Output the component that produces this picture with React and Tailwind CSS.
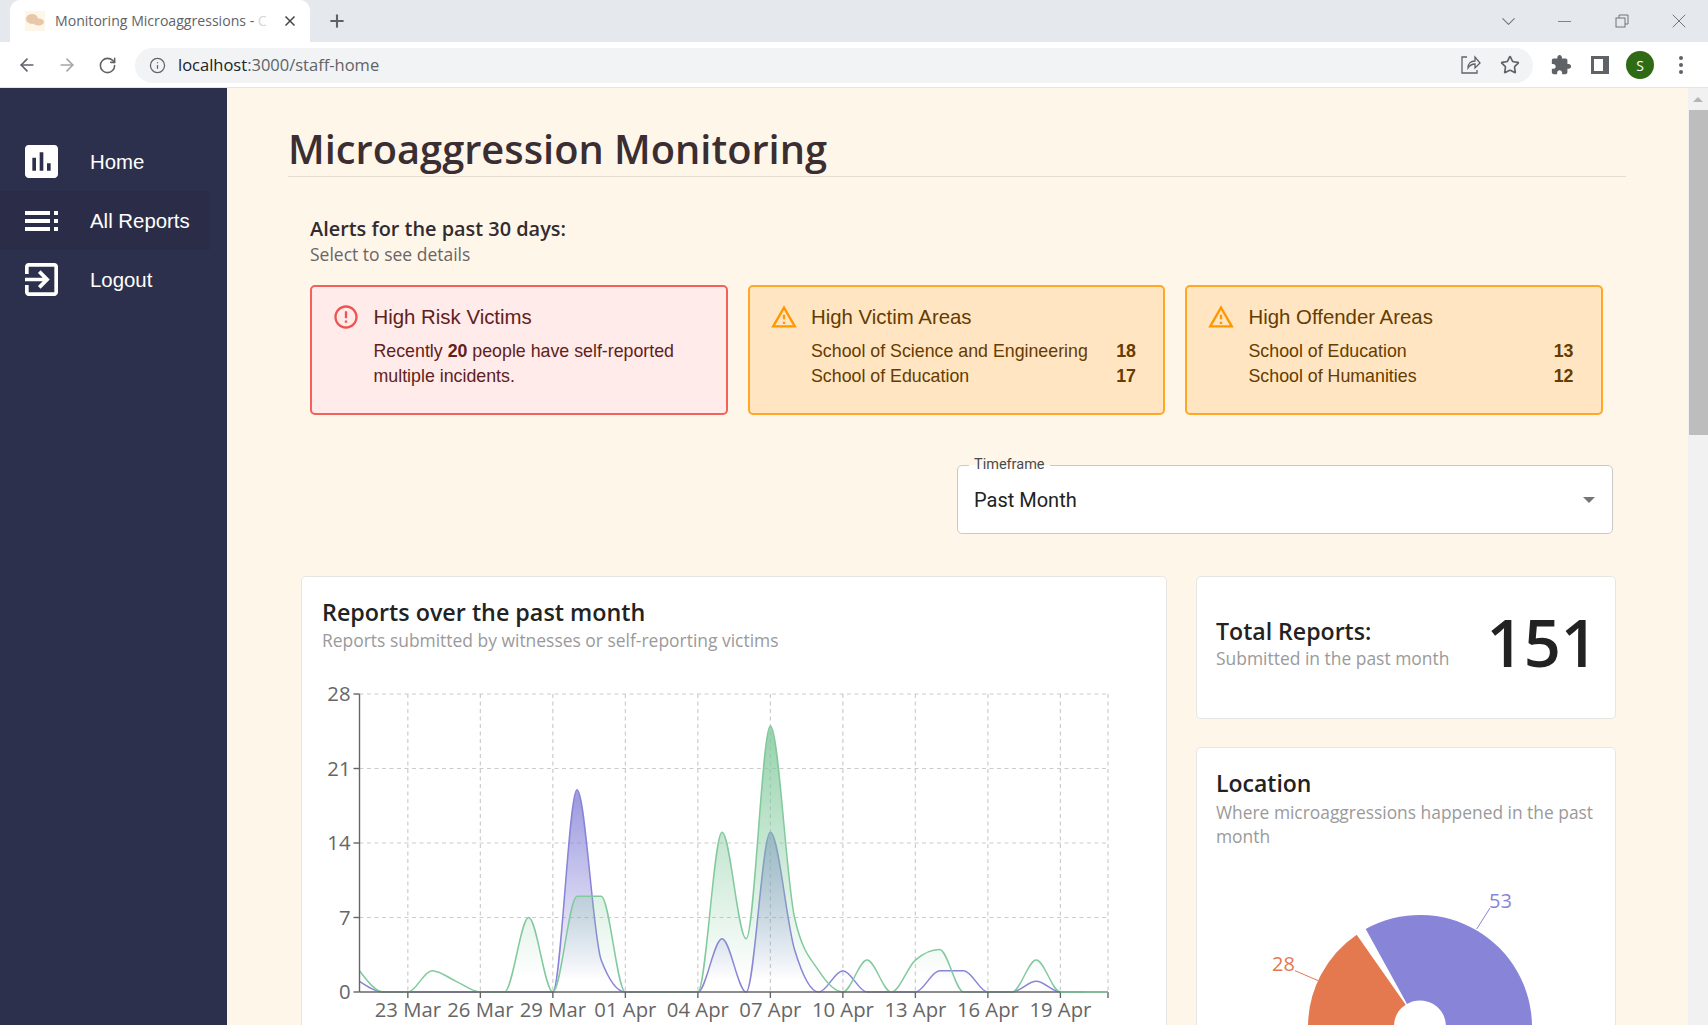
import React from "react";
import { ArrowLeft, ArrowRight, RotateCw, Info, Star, ChevronDown, Minus, X, Plus } from "lucide-react";

const green = [2, 0, 0, 2, 1, 0, 0, 7, 0, 9, 9, 0, 0, 0, 0, 15, 5, 25, 7, 2, 0, 3, 0, 3, 4, 0, 0, 0, 3, 0, 0];
const purple = [1, 0, 0, 0, 0, 0, 0, 0, 0, 19, 3, 0, 0, 0, 0, 5, 0, 15, 4, 0, 2, 0, 0, 0, 2, 2, 0, 0, 1, 0, 0];
const xTicks = ["23 Mar", "26 Mar", "29 Mar", "01 Apr", "04 Apr", "07 Apr", "10 Apr", "13 Apr", "16 Apr", "19 Apr"];

const left = 359.5;
const right = 1108;
const top = 694;
const base = 992;
const px = (i) => left + i * ((right - left) / 30.97);
const py = (v) => base - (v / 28) * (base - top);

// same maths as d3 curveMonotoneX
function monotone(values) {
  const pts = values.map((v, i) => [px(i), py(v)]);
  const n = pts.length;
  const slope = [];
  for (let i = 0; i < n - 1; i++) slope.push((pts[i + 1][1] - pts[i][1]) / (pts[i + 1][0] - pts[i][0]));
  const t = [slope[0]];
  for (let i = 1; i < n - 1; i++) {
    const a = slope[i - 1];
    const b = slope[i];
    t.push(a * b <= 0 ? 0 : (Math.sign(a) + Math.sign(b)) * Math.min(Math.abs(a), Math.abs(b), 0.25 * Math.abs(a + b)));
  }
  t.push(slope[n - 2]);
  t[0] = (3 * slope[0] - t[1]) / 2;
  let d = `M${pts[0][0]} ${pts[0][1]}`;
  for (let i = 0; i < n - 1; i++) {
    const h = (pts[i + 1][0] - pts[i][0]) / 3;
    d += `C${pts[i][0] + h} ${pts[i][1] + h * t[i]} ${pts[i + 1][0] - h} ${pts[i + 1][1] - h * t[i + 1]} ${pts[i + 1][0]} ${pts[i + 1][1]}`;
  }
  return d;
}

function closeArea(line, n) {
  return `${line}L${px(n - 1)} ${base}L${px(0)} ${base}Z`;
}

function Series({ values, color, id }) {
  const line = monotone(values);
  return (
    <g>
      <path d={closeArea(line, values.length)} fill={`url(#${id})`} />
      <path d={line} fill="none" stroke={color} strokeWidth="1.5" />
    </g>
  );
}

function ReportsChart() {
  const xs = [0, 1, 2, 3, 4, 5, 6, 7, 8, 9].map((i) => px(2 + i * 3));
  return (
    <svg className="block mt-[28px]" width="830" height="400" viewBox="322 680 830 400">
      <defs>
        <linearGradient id="fillPurple" x1="0" y1="0" x2="0" y2="1">
          <stop offset="5%" stopColor="#8884d8" stopOpacity="0.8" />
          <stop offset="95%" stopColor="#8884d8" stopOpacity="0" />
        </linearGradient>
        <linearGradient id="fillGreen" x1="0" y1="0" x2="0" y2="1">
          <stop offset="5%" stopColor="#82ca9d" stopOpacity="0.8" />
          <stop offset="95%" stopColor="#82ca9d" stopOpacity="0" />
        </linearGradient>
      </defs>
      <g stroke="#ccc" strokeWidth="1.2" strokeDasharray="4 3.5">
        {[28, 21, 14, 7].map((v) => (
          <line key={v} x1={left} x2={right} y1={py(v)} y2={py(v)} />
        ))}
        {[...xs, right].map((x) => (
          <line key={x} x1={x} x2={x} y1={top} y2={base} />
        ))}
      </g>
      <Series values={purple} color="#8884d8" id="fillPurple" />
      <Series values={green} color="#82ca9d" id="fillGreen" />
      <g stroke="#666" strokeWidth="1.4">
        <line x1={left} x2={left} y1={top} y2={base} />
        <line x1={left} x2={right} y1={base} y2={base} />
        {[28, 21, 14, 7, 0].map((v) => (
          <line key={v} x1={left - 6} x2={left} y1={py(v)} y2={py(v)} />
        ))}
        {[...xs, right].map((x) => (
          <line key={x} x1={x} x2={x} y1={base} y2={base + 6} />
        ))}
      </g>
      <line x1={px(29)} x2={right} y1={base} y2={base} stroke="#82ca9d" strokeWidth="1.5" />
      <g fill="#666" fontSize="20.3" fontFamily="'Open Sans', sans-serif">
        {[28, 21, 14, 7, 0].map((v) => (
          <text key={v} x={left - 9} y={py(v) + 7} textAnchor="end">
            {v}
          </text>
        ))}
        {xTicks.map((t, i) => (
          <text key={t} x={xs[i]} y={1017} textAnchor="middle">
            {t}
          </text>
        ))}
      </g>
    </svg>
  );
}

function LocationPie() {
  return (
    <svg className="block mt-[31px]" width="418" height="200" viewBox="1197 880 418 200">
      <path d="M1365.7 930A112 112 0 0 1 1532 1028L1446 1028A26 26 0 0 0 1407 1005Z" fill="#8884d8" />
      <path d="M1356.7 935.7A112 112 0 0 0 1308 1028L1394 1028A26 26 0 0 1 1405.7 1005.7Z" fill="#e4784f" />
      <line x1="1476.7" y1="930" x2="1490" y2="909" stroke="#8884d8" />
      <line x1="1318.3" y1="981.7" x2="1295" y2="971.7" stroke="#e4784f" />
      <g fontSize="20" fontFamily="'Open Sans', sans-serif">
        <text x="1489" y="909" fill="#8884d8">53</text>
        <text x="1272" y="972" fill="#e4784f">28</text>
      </g>
    </svg>
  );
}

function NavItem({ label, active, children }) {
  return (
    <div className={`flex items-center h-[59px] w-[210px] pl-[25px] ${active ? "bg-[#2b2d48]" : ""}`}>
      <div className="w-[33px] h-[33px] flex items-center justify-center">{children}</div>
      <span className="ml-[32px] pt-[1px] text-[20.4px] text-white font-['Liberation_Sans',sans-serif]">{label}</span>
    </div>
  );
}

function Sidebar() {
  return (
    <aside className="w-[227px] shrink-0 bg-[#2d304c] pt-[44px]">
      <NavItem label="Home">
        <svg width="33" height="33" viewBox="3 3 18 18" fill="#fff">
          <path d="M19 3H5c-1.1 0-2 .9-2 2v14c0 1.1.9 2 2 2h14c1.1 0 2-.9 2-2V5c0-1.1-.9-2-2-2zM9 17H7v-7h2v7zm4 0h-2V7h2v10zm4 0h-2v-4h2v4z" />
        </svg>
      </NavItem>
      <NavItem label="All Reports" active>
        <svg width="33" height="20" viewBox="0 0 33 20" fill="#fff">
          <rect x="0" y="0" width="25" height="4" />
          <rect x="0" y="8" width="25" height="4" />
          <rect x="0" y="16" width="25" height="4" />
          <rect x="29" y="0" width="4" height="4" />
          <rect x="29" y="8" width="4" height="4" />
          <rect x="29" y="16" width="4" height="4" />
        </svg>
      </NavItem>
      <NavItem label="Logout">
        <svg width="33" height="33" viewBox="3 3 18 18" fill="#fff">
          <path d="M10.09 15.59L11.5 17l5-5-5-5-1.41 1.41L12.67 11H3v2h9.67l-2.58 2.59zM19 3H5c-1.11 0-2 .9-2 2v4h2V5h14v14H5v-4H3v4c0 1.1.89 2 2 2h14c1.1 0 2-.9 2-2V5c0-1.1-.9-2-2-2z" />
        </svg>
      </NavItem>
    </aside>
  );
}

function ChromeBar() {
  return (
    <div className="shrink-0">
      <div className="h-[42px] bg-[#e5e8ec] flex items-end pl-[10px] pr-[17px]">
        <div className="w-[300px] h-[42px] bg-white rounded-t-[10px] flex items-center pl-[15px] pr-[12px]">
          <div className="w-[20px] h-[20px] bg-[#fff6ea] flex items-center justify-center">
            <svg width="20" height="20" viewBox="0 0 20 20" fill="#e8c8a8">
              <ellipse cx="7" cy="8" rx="6" ry="5" />
              <ellipse cx="13.5" cy="11" rx="5.5" ry="3.5" />
            </svg>
          </div>
          <span className="ml-[10px] whitespace-nowrap text-[14.1px] text-[#5f6368] font-['Open_Sans',sans-serif]">
            Monitoring Microaggressions - <span className="text-[#d5d7d9]">C</span>
          </span>
          <X size={16} strokeWidth={2.5} className="ml-auto text-[#45484d]" />
        </div>
        <Plus size={20} strokeWidth={2.5} className="ml-[17px] mb-[11px] text-[#5f6368]" />
        <div className="ml-auto flex items-center h-[36px] self-center text-[#70757a]">
          <ChevronDown size={23} strokeWidth={1.1} />
          <Minus size={21} strokeWidth={1} className="ml-[34px]" />
          <svg className="ml-[40px]" width="14" height="14" viewBox="0 0 14 14" fill="none" stroke="currentColor">
            <rect x="1" y="4" width="9" height="9" />
            <path d="M4 4V1h9v9h-3" />
          </svg>
          <X size={24} strokeWidth={1} className="ml-[38px]" />
        </div>
      </div>
      <div className="h-[46px] pt-[1px] bg-white border-b-[1.5px] border-[#e4e6e9] flex items-center text-[#5f6368]">
        <ArrowLeft size={20} strokeWidth={2} className="ml-[17px]" />
        <ArrowRight size={20} strokeWidth={2} className="ml-[20px] text-[#a3a6aa]" />
        <RotateCw size={19} strokeWidth={2} className="ml-[21px]" />
        <div className="ml-[18px] w-[1398px] h-[35px] bg-[#f1f3f4] rounded-full flex items-center pl-[14px] pr-[13px]">
          <Info size={17} strokeWidth={1.75} />
          <span className="ml-[12px] text-[16.5px] text-[#5f6368] font-['Open_Sans',sans-serif]">
            <span className="text-[#202124]">localhost</span>:3000/staff-home
          </span>
          <svg className="ml-auto mr-[-1px]" width="20" height="20" viewBox="0 0 20 20" fill="none" stroke="currentColor" strokeWidth="1.3">
            <path d="M6 2H1v16h15v-3M7 13c0-5 3-7 7-7V2l5 6-5 5V9c-3 0-5 1-7 4z" />
          </svg>
          <Star size={20} strokeWidth={2} className="ml-[20px]" />
        </div>
        <svg className="ml-[17px]" width="22" height="22" viewBox="0 0 24 24" fill="currentColor">
          <path d="M20.5 11H19V7c0-1.1-.9-2-2-2h-4V3.5C13 2.12 11.88 1 10.5 1S8 2.12 8 3.5V5H4c-1.1 0-1.99.9-1.99 2v3.8H3.5c1.49 0 2.7 1.21 2.7 2.7s-1.21 2.7-2.7 2.7H2V20c0 1.1.9 2 2 2h3.8v-1.5c0-1.49 1.21-2.7 2.7-2.7 1.49 0 2.7 1.21 2.7 2.7V22H17c1.1 0 2-.9 2-2v-4h1.5c1.38 0 2.5-1.12 2.5-2.5S21.88 11 20.5 11z" />
        </svg>
        <div className="ml-[19px] w-[18px] h-[18px] border-[3px] border-r-[6px] border-[#5f6368]" />
        <div className="ml-[17px] w-[28px] h-[28px] rounded-full bg-[#2e6b14] text-white text-[14px] flex items-center justify-center font-['Open_Sans',sans-serif]">
          S
        </div>
        <div className="ml-[25px] flex flex-col gap-[3px]">
          <span className="w-[4px] h-[4px] rounded-full bg-[#5f6368]" />
          <span className="w-[4px] h-[4px] rounded-full bg-[#5f6368]" />
          <span className="w-[4px] h-[4px] rounded-full bg-[#5f6368]" />
        </div>
      </div>
    </div>
  );
}

function WarnIcon() {
  return (
    <svg width="28" height="28" viewBox="0 0 24 24" fill="#ff9800" className="shrink-0">
      <path d="M12 5.99 19.53 19H4.47L12 5.99M12 2 1 21h22L12 2zm1 14h-2v2h2v-2zm0-6h-2v4h2v-4z" />
    </svg>
  );
}

function AreaAlert({ title, rows }) {
  return (
    <div className="w-[417.5px] h-[130px] rounded-[5px] border-2 border-[#ffa726] bg-[#ffe5c2] text-[#663c00] flex pl-[20px] pt-[16px] pr-[27px] font-['Liberation_Sans',sans-serif]">
      <WarnIcon />
      <div className="ml-[13.5px] flex-1">
        <div className="text-[20.4px] leading-[28px]">{title}</div>
        <div className="mt-[8px] text-[17.8px] leading-[25px]">
          {rows.map(([name, n]) => (
            <div key={name} className="flex justify-between">
              <span>{name}</span>
              <b>{n}</b>
            </div>
          ))}
        </div>
      </div>
    </div>
  );
}

function Alerts() {
  return (
    <section className="pl-[22px] mt-[38px] font-['Open_Sans',sans-serif]">
      <div className="text-[19.9px] leading-[27px] font-semibold text-[#332b2e]">Alerts for the past 30 days:</div>
      <div className="text-[17.5px] leading-[24px] text-[#6b6466]">Select to see details</div>
      <div className="flex gap-[20px] mt-[19px]">
        <div className="w-[417.5px] h-[130px] rounded-[5px] border-2 border-[#f4605a] bg-[#ffebe9] text-[#5f2120] flex pl-[20px] pt-[16px] pr-[27px] font-['Liberation_Sans',sans-serif]">
          <svg width="28" height="28" viewBox="0 0 24 24" fill="#ef5350" className="shrink-0">
            <path d="M11 15h2v2h-2zm0-8h2v6h-2zm.99-5C6.47 2 2 6.48 2 12s4.47 10 9.99 10C17.52 22 22 17.52 22 12S17.52 2 11.99 2zM12 20c-4.42 0-8-3.58-8-8s3.58-8 8-8 8 3.58 8 8-3.58 8-8 8z" />
          </svg>
          <div className="ml-[13.5px] flex-1">
            <div className="text-[20.4px] leading-[28px]">High Risk Victims</div>
            <div className="mt-[8px] text-[17.8px] leading-[25px]">
              Recently <b>20</b> people have self-reported multiple incidents.
            </div>
          </div>
        </div>
        <AreaAlert
          title="High Victim Areas"
          rows={[
            ["School of Science and Engineering", 18],
            ["School of Education", 17],
          ]}
        />
        <AreaAlert
          title="High Offender Areas"
          rows={[
            ["School of Education", 13],
            ["School of Humanities", 12],
          ]}
        />
      </div>
    </section>
  );
}

function TimeframeSelect() {
  return (
    <div className="relative ml-[669px] mt-[50px] w-[656px] h-[69px] bg-white rounded-[5px] border-[1.5px] border-[#c9c9c9] flex items-center pl-[16px] pr-[17px] font-['Roboto',sans-serif]">
      <span className="absolute left-[11px] -top-[10px] px-[5px] text-[14.5px] leading-[18px] text-[#4b4b4b] bg-[linear-gradient(#fff6ea_50%,#fff_50%)]">
        Timeframe
      </span>
      <span className="text-[20px] text-[#222]">Past Month</span>
      <span className="ml-auto w-0 h-0 border-x-[6px] border-x-transparent border-t-[6px] border-t-[#757575]" />
    </div>
  );
}

const cardClass = "bg-white rounded-[5px] border-[1.5px] border-[#e8e6e3] font-['Open_Sans',sans-serif]";

function Dashboard() {
  return (
    <div className="flex mt-[42px] ml-[13px] gap-[29px] items-start">
      <div className={`${cardClass} w-[866px] pt-[19px] pl-[20px]`}>
        <h2 className="text-[23.3px] leading-[32px] font-semibold text-[#222]">Reports over the past month</h2>
        <p className="text-[17.45px] leading-[24px] text-[#9a9a9a]">Reports submitted by witnesses or self-reporting victims</p>
        <ReportsChart />
      </div>
      <div className="w-[420px] flex flex-col gap-[28px]">
        <div className={`${cardClass} h-[143px] flex items-center pl-[19px] pr-[17px] pb-[10px]`}>
          <div>
            <h2 className="text-[23.1px] leading-[30px] font-semibold text-[#222]">Total Reports:</h2>
            <p className="text-[17.45px] leading-[24px] text-[#9a9a9a]">Submitted in the past month</p>
          </div>
          <span className="ml-auto text-[65px] leading-none font-semibold text-[#222]">151</span>
        </div>
        <div className={`${cardClass} pt-[19px] pl-[19px]`}>
          <h2 className="text-[23px] leading-[33px] font-semibold text-[#222]">Location</h2>
          <p className="text-[17.4px] leading-[24px] pr-[16px] text-[#9a9a9a]">Where microaggressions happened in the past month</p>
          <div className="-ml-[19px]">
            <LocationPie />
          </div>
        </div>
      </div>
    </div>
  );
}

export default function App() {
  return (
    <div className="h-screen overflow-hidden flex flex-col bg-[#fff6ea]">
      <ChromeBar />
      <div className="flex flex-1 min-h-0">
        <Sidebar />
        <main className="flex-1 min-w-0 overflow-hidden pl-[61px] pt-[39px]">
          <h1 className="w-[1338px] h-[50px] border-b-[1.5px] border-[#e6ddd2] text-[39.8px] leading-[44px] font-semibold text-[#3a2e32] font-['Open_Sans',sans-serif]">
            Microaggression Monitoring
          </h1>
          <Alerts />
          <TimeframeSelect />
          <Dashboard />
        </main>
        <div className="w-[20px] shrink-0 bg-[#f1f1f1] flex flex-col items-center">
          <span className="mt-[9px] w-0 h-0 border-x-[5px] border-x-transparent border-b-[5px] border-b-[#b5b5b5]" />
          <div className="mt-[8px] w-[19px] h-[325px] bg-[#bdbdbd]" />
        </div>
      </div>
    </div>
  );
}
